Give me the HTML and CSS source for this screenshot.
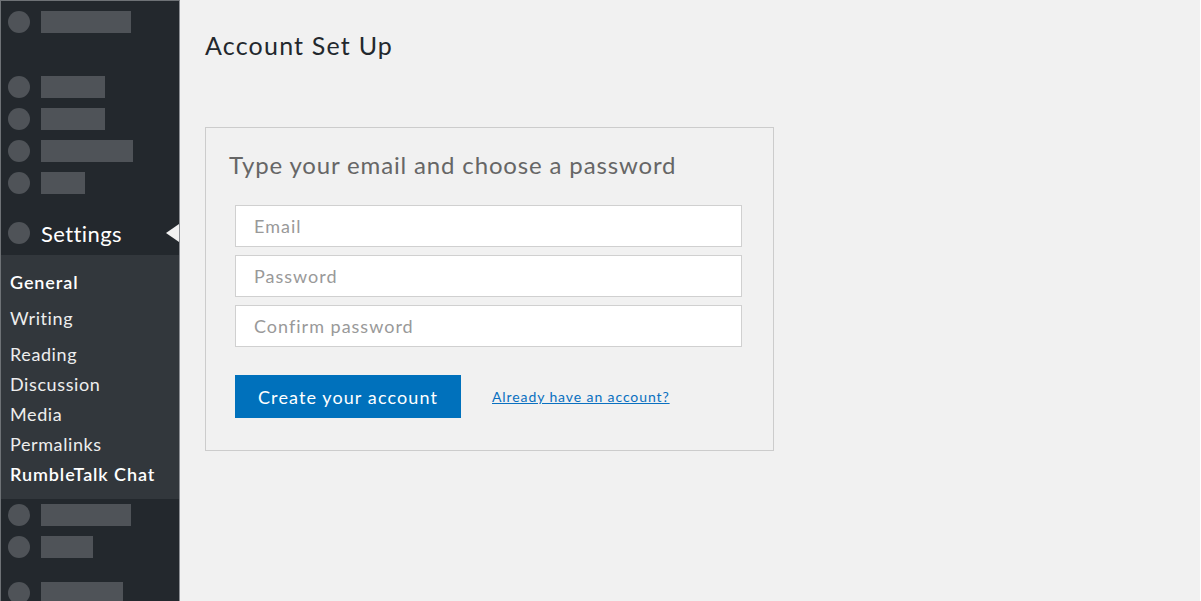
FILE: index.html
```html
<!DOCTYPE html>
<html>
<head>
<meta charset="utf-8">
<link rel="stylesheet" href="styles.css">
</head>
<body>
<div class="frame">
  <aside class="sidebar">
    <div class="row row-first"><span class="dot"></span><span class="bar w90"></span></div>
    <div class="group">
      <div class="row"><span class="dot"></span><span class="bar w64"></span></div>
      <div class="row"><span class="dot"></span><span class="bar w64"></span></div>
      <div class="row"><span class="dot"></span><span class="bar w92"></span></div>
      <div class="row"><span class="dot"></span><span class="bar w44"></span></div>
    </div>
    <div class="settings">
      <span class="dot"></span><span class="settings-label">Settings</span>
      <span class="arrow"></span>
    </div>
    <ul class="submenu">
      <li class="current gap">General</li>
      <li class="gap">Writing</li>
      <li>Reading</li>
      <li>Discussion</li>
      <li>Media</li>
      <li>Permalinks</li>
      <li class="current">RumbleTalk Chat</li>
    </ul>
    <div class="row"><span class="dot"></span><span class="bar w90"></span></div>
    <div class="row"><span class="dot"></span><span class="bar w52"></span></div>
    <div class="row row-last"><span class="dot"></span><span class="bar w82"></span></div>
  </aside>
  <main class="main">
    <h1 class="title">Account Set Up</h1>
    <section class="card">
      <h2 class="card-title">Type your email and choose a password</h2>
      <form class="form">
        <input class="field" type="email" placeholder="Email">
        <input class="field" type="password" placeholder="Password">
        <input class="field" type="password" placeholder="Confirm password">
        <div class="actions">
          <button class="btn" type="button">Create your account</button>
          <a class="link" href="#">Already have an account?</a>
        </div>
      </form>
    </section>
  </main>
</div>
</body>
</html>
```

FILE: styles.css
```css
* { box-sizing: border-box; }
html, body { margin: 0; padding: 0; }
body {
  font-family: Lato, "Noto Sans", sans-serif;
  background: #f1f1f1;
}
.frame {
  width: 1201px;
  height: 601px;
  display: flex;
  overflow: hidden;
  background: #f1f1f1;
  border-right: 1px solid #ffffff;
}
.sidebar {
  width: 180px;
  flex: none;
  background: #23282d;
  border-top: 1px solid #6e7276;
  border-left: 1px solid #6e7276;
  border-right: 1px solid #8c8f94;
  display: flex;
  flex-direction: column;
}
.row {
  height: 32px;
  display: flex;
  align-items: center;
  padding-left: 7px;
  flex: none;
}
.row-first { height: 42px; margin-bottom: 28px; }
.row-last { margin-top: 14px; }
.dot {
  width: 22px;
  height: 22px;
  border-radius: 50%;
  background: #4f5358;
  flex: none;
}
.bar {
  height: 22px;
  background: #4f5358;
  margin-left: 11px;
}
.w90 { width: 90px; }
.w64 { width: 64px; }
.w92 { width: 92px; }
.w44 { width: 44px; }
.w52 { width: 52px; }
.w82 { width: 82px; }
.group { display: flex; flex-direction: column; }
.settings {
  position: relative;
  height: 44px;
  margin-top: 12px;
  display: flex;
  align-items: center;
  padding-left: 7px;
  flex: none;
}
.settings-label {
  color: #ffffff;
  font-size: 22px;
  letter-spacing: 0.4px;
  margin-left: 11px;
}
.arrow {
  position: absolute;
  right: 0;
  top: 13px;
  width: 0;
  height: 0;
  border-top: 9px solid transparent;
  border-bottom: 9px solid transparent;
  border-right: 13px solid #f1f1f1;
}
.submenu {
  list-style: none;
  margin: 0;
  padding: 12px 0 10px 9px;
  background: #32373c;
  flex: none;
}
.submenu li {
  height: 30px;
  line-height: 30px;
  font-size: 18px;
  letter-spacing: 0.6px;
  color: #eeeeee;
}
.submenu li.gap { margin-bottom: 6px; }
.submenu li.current { color: #ffffff; font-weight: 600; letter-spacing: 0.9px; }
.main {
  flex: 1;
  padding: 0 0 0 25px;
}
.title {
  margin: 0;
  padding-top: 29px;
  height: 127px;
  font-size: 25px;
  line-height: 32px;
  font-weight: 400;
  letter-spacing: 1.2px;
  color: #23282d;
}
.card {
  width: 569px;
  height: 324px;
  border: 1px solid #cccccc;
  background: #f1f1f1;
  padding: 22px 0 0 23px;
}
.card-title {
  margin: 0 0 25px 0;
  font-size: 24px;
  line-height: 30px;
  font-weight: 400;
  letter-spacing: 0.85px;
  color: #666666;
}
.form {
  padding-left: 6px;
  display: flex;
  flex-direction: column;
}
.field {
  width: 507px;
  height: 42px;
  margin: 0 0 8px 0;
  border: 1px solid #d0d0d0;
  background: #ffffff;
  padding: 0 18px;
  font-family: inherit;
  font-size: 18px;
  letter-spacing: 1px;
  color: #333;
  outline: none;
}
.field::placeholder { color: #999999; }
.actions {
  margin-top: 20px;
  display: flex;
  align-items: center;
}
.btn {
  width: 226px;
  height: 43px;
  border: none;
  background: #0071bc;
  color: #ffffff;
  font-family: inherit;
  font-size: 18px;
  letter-spacing: 1.1px;
  padding: 0;
  cursor: pointer;
}
.link {
  margin-left: 31px;
  font-size: 14px;
  letter-spacing: 0.9px;
  color: #0a70c0;
  text-decoration: underline;
}
```
